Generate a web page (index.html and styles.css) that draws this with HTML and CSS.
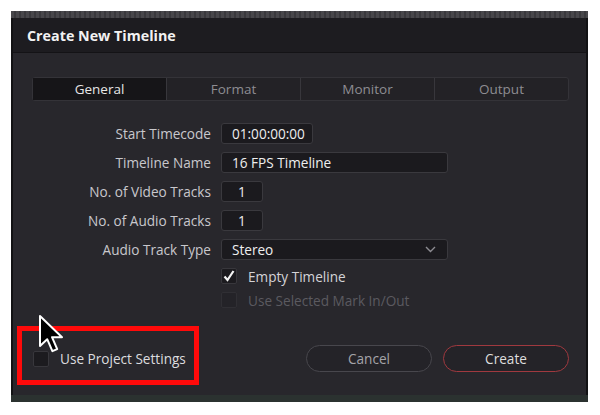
FILE: index.html
```html
<!DOCTYPE html>
<html lang="en">
<head>
    <meta charset="UTF-8">
    <title>Create New Timeline</title>
    <link rel="stylesheet" href="styles.css">
</head>
<body>

    <div class="window">
        <div class="strip"></div>

        <div class="dialog">
            <div class="title-bar">Create New Timeline</div>

            <div class="dialog-body">
                <div class="tabs">
                    <div class="tab active">General</div>
                    <div class="tab">Format</div>
                    <div class="tab">Monitor</div>
                    <div class="tab">Output</div>
                </div>

                <div class="form">
                    <label>Start Timecode</label>
                    <div class="field w-tc">01:00:00:00</div>

                    <label>Timeline Name</label>
                    <div class="field w-wide">16 FPS Timeline</div>

                    <label>No. of Video Tracks</label>
                    <div class="field w-num">1</div>

                    <label>No. of Audio Tracks</label>
                    <div class="field w-num">1</div>

                    <label>Audio Track Type</label>
                    <div class="field w-wide select">
                        <span>Stereo</span>
                        <svg class="chevron" width="11" height="7" viewBox="0 0 11 7">
                            <path d="M1 1 L5.5 5.5 L10 1" fill="none" stroke="#8d8c92" stroke-width="1.4"/>
                        </svg>
                    </div>

                    <span></span>
                    <div class="check-row">
                        <span class="box">
                            <svg width="14" height="14" viewBox="0 0 14 14">
                                <path d="M2.5 7.5 L5.5 11 L11.5 2" fill="none" stroke="#f4f4f4" stroke-width="2.2"/>
                            </svg>
                        </span>
                        <span>Empty Timeline</span>
                    </div>

                    <span></span>
                    <div class="check-row disabled">
                        <span class="box"></span>
                        <span>Use Selected Mark In/Out</span>
                    </div>
                </div>

                <div class="footer">
                    <div class="check-row project">
                        <span class="box"></span>
                        <span>Use Project Settings</span>
                    </div>
                    <div class="buttons">
                        <button class="btn">Cancel</button>
                        <button class="btn primary">Create</button>
                    </div>
                </div>
            </div>
        </div>

        <div class="strip bottom"></div>

        <!-- annotation overlay -->
        <div class="highlight"></div>
        <svg class="cursor" width="26" height="40" viewBox="0 0 13 20">
            <path d="M1 1 L1 16 L4.6 12.6 L7.2 18.6 L9.6 17.6 L7 11.6 L12 11.6 Z" fill="#000" stroke="#fff" stroke-width="1" stroke-linejoin="round"/>
        </svg>
    </div>

</body>
</html>
```

FILE: styles.css
```css
body {
    margin: 0;
    background: #ffffff;
    font-family: "Open Sans", "Liberation Sans", sans-serif;
}

.window {
    position: relative;
    margin: 11px 0 0 11px;
    width: 577px;
    height: 391px;
    background: #121214;
    display: flex;
    flex-direction: column;
}

.strip {
    height: 7px;
    background: repeating-linear-gradient(90deg, #48474b 0, #48474b 3px, #3a393d 3px, #3a393d 5px);
}

.strip.bottom {
    height: 7px;
    background: #2b3230;
}

.dialog {
    flex: 1;
    margin: 0 2px;
    display: flex;
    flex-direction: column;
    background: #28272c;
}

.title-bar {
    height: 34px;
    line-height: 36px;
    padding-left: 14px;
    background: #1d1c20;
    border-bottom: 1px solid #141316;
    color: #f2f2f2;
    font-size: 14.3px;
    font-weight: 700;
}

.dialog-body {
    flex: 1;
    padding: 24px 17px 0 19px;
    display: flex;
    flex-direction: column;
}

.tabs {
    display: flex;
    height: 24px;
    background: #232226;
    border: 1px solid #343338;
    border-radius: 3px;
    box-sizing: border-box;
}

.tab {
    flex: 1;
    text-align: center;
    line-height: 22px;
    font-size: 13.5px;
    color: #8e8d92;
    border-left: 1px solid #38373c;
}

.tab:first-child {
    border-left: none;
}

.tab.active {
    background: #161518;
    color: #e6e6e6;
}

.form {
    margin-top: 22px;
    display: grid;
    grid-template-columns: 179px auto;
    column-gap: 10px;
    row-gap: 8px;
    align-items: center;
    justify-items: start;
}

label {
    justify-self: end;
    font-size: 13.6px;
    color: #c9c8cc;
}

.field {
    height: 21px;
    box-sizing: border-box;
    background: #1b1a1e;
    border: 1px solid #3a393e;
    border-radius: 3px;
    padding-left: 10px;
    line-height: 19px;
    font-size: 13.6px;
    color: #eeeeee;
}

.w-tc { width: 92px; }
.w-wide { width: 227px; }
.w-num { width: 42px; padding-left: 0; text-align: center; }

.select {
    display: flex;
    justify-content: space-between;
    align-items: center;
    padding-right: 11px;
}

.check-row {
    display: flex;
    align-items: center;
    gap: 11px;
    height: 16px;
    font-size: 13.6px;
    color: #d4d3d7;
}

.box {
    width: 16px;
    height: 16px;
    box-sizing: border-box;
    background: #1c1b1f;
    border: 1px solid #38373c;
    border-radius: 2px;
    display: flex;
    align-items: center;
    justify-content: center;
}

.check-row.disabled {
    color: #5b5a60;
}

.check-row.disabled .box {
    background: #242328;
    border-color: #302f34;
}

.footer {
    margin-top: auto;
    margin-bottom: 23px;
    display: flex;
    justify-content: space-between;
    align-items: center;
}

.check-row.project {
    margin-left: 1px;
    color: #dcdcdf;
}

.buttons {
    display: flex;
    gap: 11px;
}

.btn {
    width: 126px;
    height: 27px;
    border-radius: 14px;
    background: #242328;
    border: 1px solid #48474d;
    font-family: "Open Sans", "Liberation Sans", sans-serif;
    font-size: 13.6px;
    color: #a4a3a8;
}

.btn.primary {
    border-color: #a0393f;
    color: #dedede;
}

.highlight {
    position: absolute;
    left: 6px;
    top: 315px;
    width: 182px;
    height: 59px;
    box-sizing: border-box;
    border: 5px solid #ff0a0a;
}

.cursor {
    position: absolute;
    left: 27px;
    top: 303px;
}
```
